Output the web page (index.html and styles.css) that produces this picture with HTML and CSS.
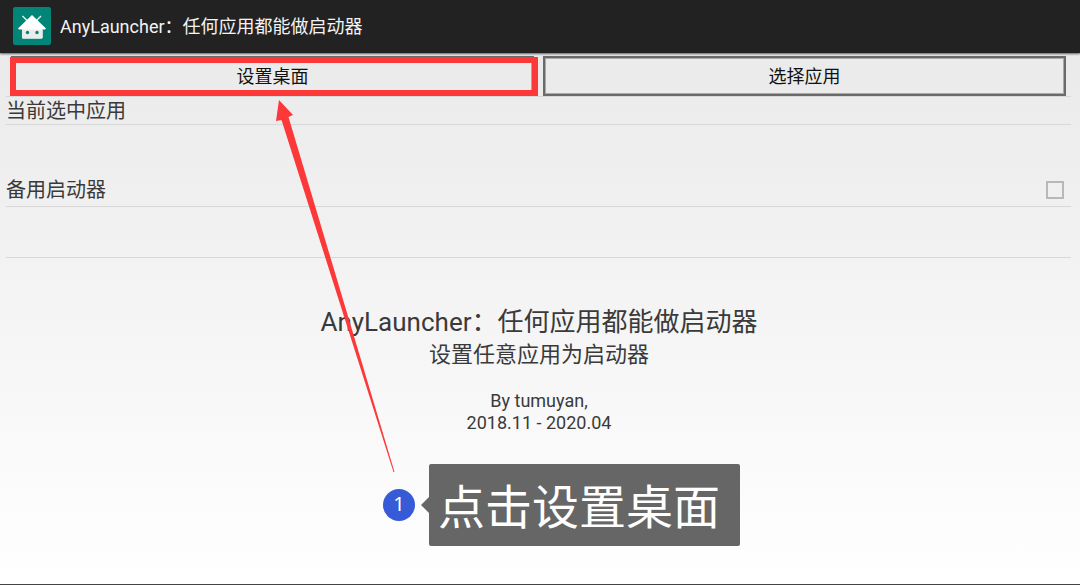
FILE: index.html
```html
<!DOCTYPE html>
<html lang="zh-CN">
<head>
  <meta charset="UTF-8">
  <meta name="viewport" content="width=device-width, initial-scale=1.0">
  <title>AnyLauncher</title>
  <link rel="stylesheet" href="styles.css">
</head>
<body>
  <header class="action-bar">
    <svg class="app-icon" viewBox="0 0 38 38" aria-hidden="true">
      <rect width="38" height="38" rx="2" fill="#008576"/>
      <path d="M9.500 9l5 5M28 9l-5 5" stroke="#d9efec" stroke-width="1.500"/>
      <path d="M19 8L33 21.500L32 22.500H29.500V30.500Q29.500 31.500 28.500 31.500H10Q9 31.500 9 30.500V22.500H6L5 21.500Z" fill="#fff"/>
      <path d="M9 22.500h20.500v8q0 1-1 1H10q-1 0-1-1z" fill="#ebebeb"/>
      <circle cx="14.500" cy="25.500" r="1.700" fill="#008576"/>
      <circle cx="24" cy="25.500" r="1.700" fill="#008576"/>
    </svg>
    <span class="app-title">AnyLauncher：任何应用都能做启动器</span>
  </header>

  <main>
    <!-- Top buttons -->
    <div class="buttons">
      <button type="button" class="button">设置桌面</button>
      <button type="button" class="button">选择应用</button>
    </div>

    <!-- Settings -->
    <section class="settings">
      <div class="setting-name">当前选中应用</div>
      <div class="setting-row">
        <label for="backup">备用启动器</label>
        <input type="checkbox" id="backup" class="checkbox">
      </div>
      <div class="setting-value"></div>
    </section>

    <!-- About -->
    <section class="about">
      <h1>AnyLauncher：任何应用都能做启动器</h1>
      <h2>设置任意应用为启动器</h2>
      <p>By tumuyan,<br>2018.11 - 2020.04</p>
    </section>
  </main>

  <!-- Guide step drawn over the page -->
  <svg class="arrow" viewBox="0 0 120 374" aria-hidden="true">
    <path d="M4 0L18 15L13.500 17L119.500 372L118.500 372L6.500 20L1 21Z" fill="#fd3838"/>
  </svg>
  <div class="step">
    <span class="step-number">1</span>
    <div class="step-text">点击设置桌面</div>
  </div>
  <div class="highlight"></div>
</body>
</html>
```

FILE: styles.css
```css
/* General Styles */
* {
  box-sizing: border-box;
}

body {
  position: relative;
  margin: 0;
  min-height: 100vh;
  font-family: Roboto, "Noto Sans CJK SC", sans-serif;
  color: #3a3a3a;
  background: linear-gradient(#e8e8e8, #fff);
  border-bottom: 1px solid #444;
}

.action-bar {
  display: flex;
  align-items: center;
  gap: 9px;
  height: 53px;
  padding: 0 13px 1px;
  background-color: #222;
  box-shadow: 0 1px 2px rgba(0, 0, 0, 0.6);
}

.app-icon {
  width: 38px;
  height: 38px;
}

.app-title {
  padding-top: 2px;
  font-size: 18px;
  line-height: 24px;
  color: #f3f3f3;
}

/* Buttons */
.buttons {
  display: flex;
  gap: 9px;
  padding: 3px 14px 0 11px;
}

.button {
  flex: 1;
  height: 40px;
  padding: 2px 0 0;
  border: 2px solid #6a6a6a;
  box-shadow: inset 0 0 0 1px #a8a8a8;
  background-color: #ebebeb;
  color: #111;
  font-family: inherit;
  font-size: 18px;
  line-height: 24px;
}

/* Settings */
.settings {
  margin: 0 9px 0 6px;
  border-top: 1px solid #d8d8d8;
  font-size: 20px;
  line-height: 28px;
}

.setting-name {
  height: 28px;
  border-bottom: 1px solid #d8d8d8;
}

.setting-row {
  display: flex;
  justify-content: space-between;
  align-items: center;
  padding: 51px 7px 2px 0;
  border-bottom: 1px solid #d8d8d8;
}

.checkbox {
  appearance: none;
  width: 18px;
  height: 18px;
  margin: 0;
  border: 2px solid #b8b8b8;
}

.checkbox:checked {
  background-color: #008576;
}

.setting-value {
  height: 51px;
  border-bottom: 1px solid #d8d8d8;
}

/* About */
.about {
  padding: 46px 2px 0 0;
  text-align: center;
}

.about h1 {
  margin: 0;
  font-size: 26px;
  font-weight: normal;
  line-height: 36px;
}

.about h2 {
  margin: 1px 0 0;
  font-size: 22px;
  font-weight: normal;
  line-height: 28px;
}

.about p {
  margin: 21px 0 0;
  font-size: 18px;
  line-height: 22px;
}

/* Guide step */
.highlight {
  position: absolute;
  top: 57px;
  left: 10px;
  width: calc(50% - 12px);
  height: 39px;
  border: 6px solid #fd3838;
  pointer-events: none;
}

.arrow {
  position: absolute;
  top: 100px;
  left: 275px;
  width: 120px;
  height: 374px;
  pointer-events: none;
}

.step {
  position: absolute;
  top: 464px;
  left: 383px;
  display: flex;
  align-items: center;
  gap: 14px;
}

.step-number {
  width: 32px;
  height: 32px;
  border-radius: 50%;
  background-color: #375ad6;
  color: #fff;
  font-family: "Noto Sans", sans-serif;
  font-size: 20px;
  line-height: 30px;
  text-align: center;
}

.step-text {
  position: relative;
  padding: 9px 20px 3px 9px;
  border-radius: 2px;
  background-color: #666;
  color: #fff;
  font-size: 47px;
  line-height: 70px;
}

.step-text::before {
  content: "";
  position: absolute;
  top: 33px;
  left: -8px;
  border: 8px solid transparent;
  border-left: none;
  border-right-color: #666;
}
```
